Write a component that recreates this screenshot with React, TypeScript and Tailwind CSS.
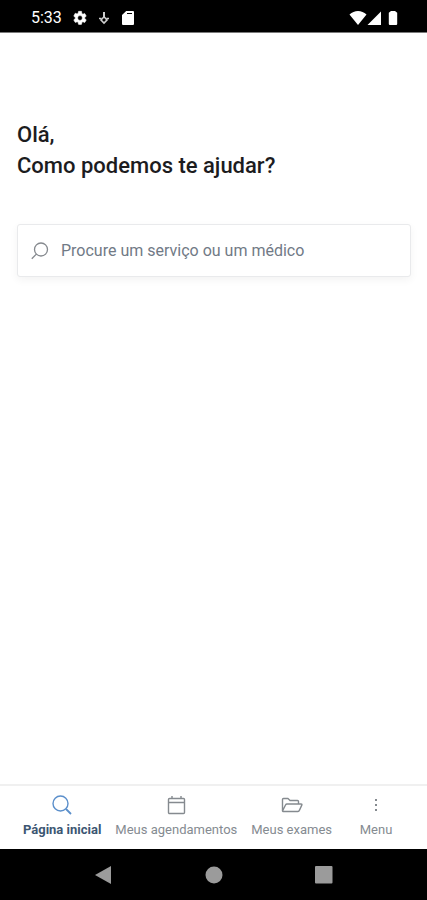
import type { ReactNode } from "react";

function StatusBar() {
  return (
    <header className="flex h-[33px] shrink-0 items-center justify-between border-b border-[#7a7a7a] bg-black pt-1 pr-7 pl-[31px] text-white">
      <div className="flex items-center">
        <span className="w-[41px] text-base">5:33</span>
        <svg className="h-4 w-4" viewBox="0 0 24 24" fill="currentColor" stroke="currentColor" strokeWidth="0.8" aria-hidden="true">
          <path d="M19.14 12.94c.04-.3.06-.61.06-.94s-.02-.64-.07-.94l2.03-1.58a.5.5 0 0 0 .12-.61l-1.92-3.32a.49.49 0 0 0-.59-.22l-2.39.96a7 7 0 0 0-1.62-.94l-.36-2.54A.48.48 0 0 0 13.92 2h-3.84a.47.47 0 0 0-.47.41l-.36 2.54c-.59.24-1.13.57-1.62.94l-2.39-.96a.48.48 0 0 0-.59.22L2.74 8.87a.48.48 0 0 0 .12.61l2.03 1.58a7.3 7.3 0 0 0 0 1.88l-2.03 1.58a.5.5 0 0 0-.12.61l1.92 3.32c.12.22.37.29.59.22l2.39-.96c.5.38 1.03.7 1.62.94l.36 2.54c.05.24.24.41.48.41h3.84c.24 0 .44-.17.47-.41l.36-2.54a7 7 0 0 0 1.62-.94l2.39.96c.22.08.47 0 .59-.22l1.92-3.32a.48.48 0 0 0-.12-.61zM12 15.6a3.6 3.6 0 1 1 0-7.2 3.6 3.6 0 0 1 0 7.2z" />
        </svg>
        <svg className="ml-2 h-4 w-4" viewBox="0 0 16 16" fill="none" stroke="#cfcfcf" aria-hidden="true">
          <path d="M8 2v6" strokeWidth="2" />
          <path d="M8 6.800 11 10l-3 3-3-3z" strokeWidth="1.600" />
          <path d="M3 8.500h2.500M10.500 8.500H13" strokeWidth="1.600" />
        </svg>
        <svg className="ml-[10px] h-4 w-3" viewBox="0 0 12 16" fill="currentColor" aria-hidden="true">
          <path fillRule="evenodd" d="M4.200 1H11a1 1 0 0 1 1 1v12a1 1 0 0 1-1 1H1a1 1 0 0 1-1-1V5zM5 3v1h5V3z" />
        </svg>
      </div>
      <div className="flex items-center">
        <svg className="h-4 w-[18px]" viewBox="0 0 18 16" fill="currentColor" aria-hidden="true">
          <path d="M9 15 .5 4.500C3 2.300 5.800 1 9 1s6 1.300 8.500 3.500z" />
        </svg>
        <svg className="h-4 w-[14px]" viewBox="0 0 14 16" fill="currentColor" aria-hidden="true">
          <path d="M14 1.500V15H.5z" />
        </svg>
        <svg className="mr-px ml-[7px] h-4 w-[10px]" viewBox="0 0 10 16" fill="currentColor" aria-hidden="true">
          <path d="M3 1h4l2.200 1.800V14a1 1 0 0 1-1 1H1.800a1 1 0 0 1-1-1V2.800z" />
        </svg>
      </div>
    </header>
  );
}

function SearchField() {
  return (
    <label className="mt-[43px] flex h-[53px] items-center rounded-[3px] border border-[#e9eaec] bg-white pr-4 pl-[13px] shadow-[0_3px_8px_rgba(0,0,0,0.05)]">
      <svg className="h-[18px] w-[18px] shrink-0 text-[#85898e]" viewBox="0 0 18 18" fill="none" stroke="currentColor" strokeWidth="1.300" aria-hidden="true">
        <circle cx="10" cy="7.500" r="6.500" />
        <path d="M5.400 12.100.8 16.700" />
      </svg>
      <input
        type="search"
        aria-label="Procure um serviço ou um médico"
        placeholder="Procure um serviço ou um médico"
        className="ml-3 h-8 min-w-0 flex-1 bg-transparent text-base text-[#4b5563] outline-none placeholder:text-[#717a86]"
      />
    </label>
  );
}

type TabProps = { label: string; active?: boolean; children: ReactNode };

function Tab({ label, active = false, children }: TabProps) {
  return (
    <button
      type="button"
      aria-current={active ? "page" : undefined}
      className={
        active
          ? "flex min-w-[60px] flex-col items-center gap-[5px] text-[13px] leading-4 font-bold whitespace-nowrap text-[#3c5672]"
          : "flex min-w-[60px] flex-col items-center gap-[5px] text-[13px] leading-4 whitespace-nowrap text-[#858b91]"
      }
    >
      <svg
        className={active ? "h-6 w-6 text-[#5b8fcb]" : "h-6 w-6 text-[#858a8f]"}
        viewBox="0 0 24 24"
        fill="none"
        stroke="currentColor"
        strokeWidth="1.400"
        strokeLinejoin="round"
        aria-hidden="true"
      >
        {children}
      </svg>
      {label}
    </button>
  );
}

function TabBar() {
  return (
    <nav className="flex h-[65px] shrink-0 items-start justify-center gap-[14px] border-t-2 border-[#f0f0f0] bg-white pt-[7px] pl-[2px]">
      <Tab label="Página inicial" active>
        <circle cx="10.500" cy="10.500" r="7.500" />
        <path d="m16 16 5 5" strokeWidth="1.800" />
      </Tab>
      <Tab label="Meus agendamentos">
        <rect x="4.500" y="5.500" width="16" height="15" rx="1" />
        <path d="M4.500 9.500h16M8 3v2.500M17 3v2.500" />
      </Tab>
      <Tab label="Meus exames">
        <path d="M2.500 18V6.500q0-1 1-1h4.500l2 2h7.500q1 0 1 1v2.500M2.500 18l3-6q.5-1 1.500-1h14q1.300 0 .8 1.100l-2.300 5q-.5 1.400-1.500 1.400H3.500q-1 0-1-.5z" />
      </Tab>
      <Tab label="Menu">
        <g fill="currentColor" stroke="none">
          <rect x="11" y="6" width="2" height="2" />
          <rect x="11" y="11" width="2" height="2" />
          <rect x="11" y="16" width="2" height="2" />
        </g>
      </Tab>
    </nav>
  );
}

function SystemBar() {
  return (
    <footer className="flex h-[51px] shrink-0 items-center justify-center gap-[92px] bg-black text-[#9b9b9b]">
      <button type="button" aria-label="Voltar">
        <svg className="h-[18px] w-[18px]" viewBox="0 0 18 18" fill="currentColor">
          <path d="M16 0v18L0 9z" />
        </svg>
      </button>
      <button type="button" aria-label="Início">
        <svg className="h-[18px] w-[18px]" viewBox="0 0 18 18" fill="currentColor">
          <circle cx="9" cy="9" r="8.500" />
        </svg>
      </button>
      <button type="button" aria-label="Recentes">
        <svg className="h-[18px] w-[18px]" viewBox="0 0 18 18" fill="currentColor">
          <rect width="17.500" height="17.500" rx="1" />
        </svg>
      </button>
    </footer>
  );
}

export default function App() {
  return (
    <div className="flex min-h-screen flex-col bg-white font-['Roboto',sans-serif]">
      <StatusBar />
      <main className="flex-1 pt-[86px] pr-4 pl-[17px]">
        <h1 className="text-[22px] leading-[31px] font-medium text-[#1c1c1e]">
          Olá,
          <br />
          Como podemos te ajudar?
        </h1>
        <SearchField />
      </main>
      <TabBar />
      <SystemBar />
    </div>
  );
}
